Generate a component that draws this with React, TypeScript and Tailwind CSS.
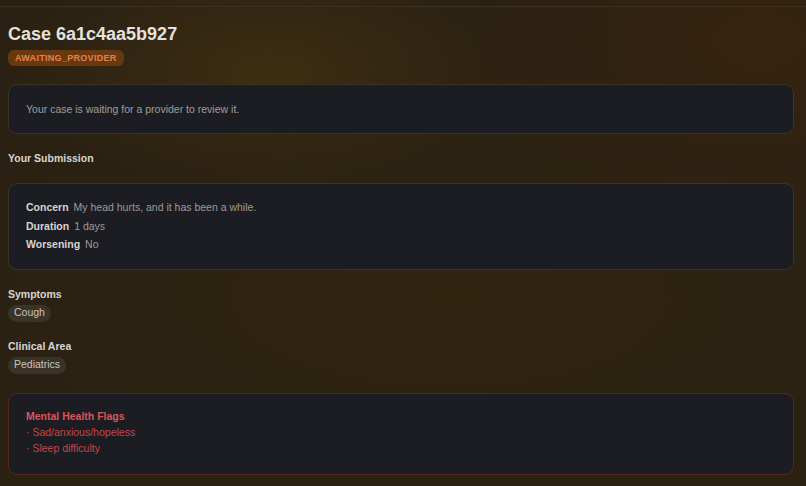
import React from "react";

export default function App() {
  return (
    <div
      className="min-h-[486px] w-full bg-[#2a2113] bg-[radial-gradient(ellipse_260px_120px_at_270px_70px,#3d2d11_0%,transparent_100%),radial-gradient(ellipse_300px_200px_at_760px_40px,#37230f_0%,transparent_100%),radial-gradient(ellipse_500px_200px_at_450px_300px,#30250f_0%,transparent_100%)] text-[10.5px] text-[#a8a29e]"
      style={{ fontFamily: '"Liberation Sans", Arial, sans-serif' }}
    >
      <div className="h-[7px] border-b border-[#3b3122]" />
      <div className="pl-2 pr-3">
        <h1 className="mt-[15px] text-[18px] font-bold leading-[24px] text-[#e4e2df]">
          Case 6a1c4aa5b927
        </h1>
        <div className="mt-[4px] flex">
          <span className="flex h-4 items-center rounded-[6px] bg-[#68380f] px-[7px] text-[9px] font-bold leading-none tracking-[0.3px] text-[#e8804a]">
            AWAITING_PROVIDER
          </span>
        </div>

        <div className="mt-[18px] rounded-[9px] border border-[#3b3324] bg-[#1c1d23] px-[17px] py-4 leading-[16px] text-[#a09d98]">
          Your case is waiting for a provider to review it.
        </div>

        <div className="mt-[16px] font-bold leading-[16px] text-[#d8d5d1]">Your Submission</div>

        <div className="mt-[17px] rounded-[9px] border border-[#3b3324] bg-[#1c1d23] px-[17px] pt-[14px] pb-[15px] leading-[18.5px]">
          <div className="flex gap-[5px]">
            <span className="font-bold text-[#d8d5d1]">Concern</span>
            <span className="text-[#9e9a95]">My head hurts, and it has been a while.</span>
          </div>
          <div className="flex gap-[5px]">
            <span className="font-bold text-[#d8d5d1]">Duration</span>
            <span className="text-[#9e9a95]">1 days</span>
          </div>
          <div className="flex gap-[5px]">
            <span className="font-bold text-[#d8d5d1]">Worsening</span>
            <span className="text-[#9e9a95]">No</span>
          </div>
        </div>

        <div className="mt-[16px] font-bold leading-[16px] text-[#d8d5d1]">Symptoms</div>
        <div className="mt-[3px] flex">
          <span className="flex h-[17px] items-center rounded-full bg-[#3a3327] px-[6px] text-[#c9c5bf]">
            Cough
          </span>
        </div>

        <div className="mt-[16px] font-bold leading-[16px] text-[#d8d5d1]">Clinical Area</div>
        <div className="mt-[3px] flex">
          <span className="flex h-[17px] items-center rounded-full bg-[#3a3327] px-[6px] text-[#c9c5bf]">
            Pediatrics
          </span>
        </div>

        <div className="mt-[19px] rounded-[9px] border border-[#56281c] bg-[#1b1d22] px-[17px] pt-[14px] pb-[18px] leading-[16px]">
          <div className="font-bold text-[#dc545a]">Mental Health Flags</div>
          <div className="text-[#c4464d]">· Sad/anxious/hopeless</div>
          <div className="text-[#c4464d]">· Sleep difficulty</div>
        </div>
      </div>
    </div>
  );
}
